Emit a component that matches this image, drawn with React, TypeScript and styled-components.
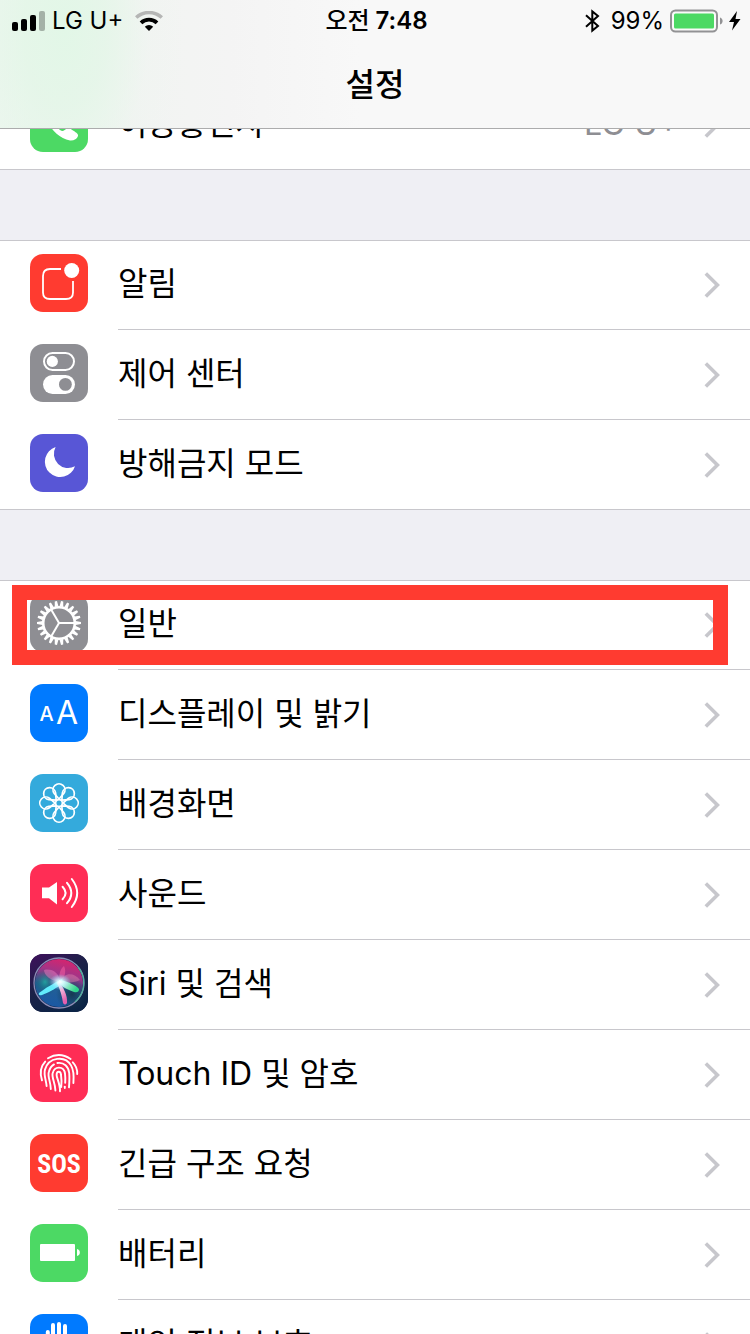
import React from "react";
import styled, { createGlobalStyle } from "styled-components";

const GlobalStyle = createGlobalStyle`
  * { box-sizing: border-box; }
  body {
    margin: 0;
    background: #efeff4;
    color: #000;
    font-family: Inter, "Noto Sans CJK KR", sans-serif;
  }
`;

const Screen = styled.div`
  height: 100vh;
  overflow: hidden;
  background: #efeff4;
`;

const Header = styled.header`
  position: relative;
  z-index: 2;
  height: 129px;
  border-bottom: 1px solid #acacad;
  background:
    radial-gradient(ellipse 120px 220px at 64px 30px, #e2f7e7 0%, rgba(228, 246, 232, 0.8) 35%, rgba(238, 245, 240, 0.35) 70%, rgba(244, 244, 244, 0) 100%),
    linear-gradient(to right, #e9f7ec 0, #ebf5ed 60px, #f2f4f2 150px, #f4f4f4 230px, #f8f8f8 360px, #f8f8f8 100%);
`;

const StatusBar = styled.div`
  display: grid;
  grid-template-columns: 1fr auto 1fr;
  align-items: center;
  height: 41px;
  padding: 0 9px 0 12px;
  font-size: 24px;
  line-height: 40px;
`;

const StatusSide = styled.div<{ $end?: boolean }>`
  display: flex;
  align-items: center;
  justify-content: ${(p) => (p.$end ? "flex-end" : "flex-start")};
  gap: ${(p) => (p.$end ? "6px" : "0")};
`;

const Carrier = styled.span`
  margin: 0 12px 0 6px;
`;

const Percent = styled.span`
  margin-left: 5px;
`;

const Clock = styled.time`
  font-weight: 600;
`;

const Meridiem = styled.span`
  font-weight: 500;
`;

const Title = styled.h1`
  margin: 0;
  height: 87px;
  font-size: 32px;
  line-height: 87px;
  font-weight: 500;
  text-align: center;
`;

const Groups = styled.main`
  display: flex;
  flex-direction: column;
  gap: 70px;
  margin-top: -49px;
`;

const Group = styled.ul`
  margin: 0;
  padding: 0;
  list-style: none;
  background: #fff;
  box-shadow: inset 0 1px #c8c7cc, inset 0 -1px #c8c7cc;
`;

const Item = styled.li`
  position: relative;
`;

const RowLink = styled.a`
  display: flex;
  height: 90px;
  padding-left: 30px;
  gap: 30px;
  color: inherit;
  text-decoration: none;
`;

const Tile = styled.svg<{ $color: string }>`
  flex: none;
  width: 58px;
  height: 58px;
  margin-top: 14px;
  border-radius: 13px;
  background: ${(p) => p.$color};
`;

const RowBody = styled.span<{ $last?: boolean }>`
  display: flex;
  flex: 1;
  align-items: center;
  padding-right: 30px;
  border-bottom: 1px solid ${(p) => (p.$last ? "transparent" : "#c8c7cc")};
`;

const Label = styled.span`
  flex: 1;
  padding-bottom: 2px;
  font-size: 32px;
  line-height: 48px;
`;

const Value = styled.span`
  margin-right: 25px;
  padding-bottom: 2px;
  color: #8e8e93;
  font-size: 32px;
  line-height: 48px;
`;

const Highlight = styled.div`
  position: absolute;
  z-index: 1;
  top: 5px;
  right: 22px;
  left: 12px;
  height: 80px;
  border: 15px solid #ff3b30;
  pointer-events: none;
`;

const Chevron = () => (
  <svg width="16" height="28" viewBox="0 0 16 28" fill="none" stroke="#c7c7cc" strokeWidth="3.6" aria-hidden="true">
    <path d="M1.8 2.4 13.4 14 1.8 25.6" />
  </svg>
);

const SignalIcon = () => (
  <svg width="34" height="20" viewBox="0 0 34 20" aria-label="signal">
    <rect x="0" y="11" width="6" height="9" rx="2" />
    <rect x="9" y="8" width="6" height="12" rx="2" />
    <rect x="18" y="4" width="6" height="16" rx="2" />
    <rect x="27" y="0" width="6" height="20" rx="2" fill="#000" opacity="0.28" />
  </svg>
);

const WifiIcon = () => (
  <svg width="28" height="20" viewBox="0 0 28 20" fill="none" aria-label="wifi">
    <path d="M1.2 6.6 A18.5 18.5 0 0 1 26.8 6.6" stroke="#b5b6b5" strokeWidth="3.4" />
    <path d="M6 11.8 A11.5 11.5 0 0 1 22 11.8" stroke="#000" strokeWidth="3.8" />
    <path d="M14 20 9.8 15.8 A6 6 0 0 1 18.2 15.8 Z" fill="#000" />
  </svg>
);

const BluetoothIcon = () => (
  <svg width="15" height="24" viewBox="0 0 15 24" fill="none" stroke="#000" strokeWidth="2" aria-label="bluetooth">
    <path d="M1 6.2 13 17 7.3 21.6 V2.4 L13 7 1 17.8" />
  </svg>
);

const BatteryIcon = () => (
  <svg width="53" height="24" viewBox="0 0 53 24" aria-label="battery">
    <rect x="1" y="1.5" width="46" height="21" rx="4.5" fill="#fafafa" stroke="#929294" strokeWidth="2" />
    <rect x="4" y="4.5" width="40" height="15" rx="1.5" fill="#4cd964" />
    <path d="M50 8.5 C53.5 9.5 53.5 14.5 50 15.5Z" fill="#929294" />
  </svg>
);

const BoltIcon = () => (
  <svg width="12" height="20" viewBox="0 0 12 20" aria-label="charging">
    <path d="M8 0 0 11 H5 L3 19.5 11.5 8 H6.5Z" />
  </svg>
);

const PhoneArt = () => (
  <path
    fill="#fff"
    d="M17 11 C20 10 24 17 24 19 C24 22 20 22 21 25 C23 29 26 33 30 36 C33 38 34 36.5 36 35 C38 33.5 40 34.5 43 36.5 C47 39 48.3 40 48 42 C47 45 44 46.8 40 46.5 C30 45 22 36 17 28 C11 18 12 14 17 11Z"
  />
);

const AlertsArt = () => (
  <>
    <path
      d="M31 15 H20 Q13 15 13 22 V38.5 Q13 45 20 45 H36 Q43 45 43 38.5 V27"
      fill="none"
      stroke="#fff"
      strokeWidth="1.8"
    />
    <circle cx="41.7" cy="16.5" r="7.5" fill="#fff" />
  </>
);

const ControlsArt = () => (
  <>
    <rect x="14" y="9" width="30" height="17" rx="8.5" fill="none" stroke="#fff" strokeWidth="2" />
    <circle cx="22.3" cy="17.4" r="5.6" fill="#fff" />
    <rect x="13" y="31" width="32" height="19" rx="9.5" fill="#fff" />
    <circle cx="35.4" cy="40.4" r="6.4" fill="#8e8e93" />
  </>
);

const MoonArt = () => (
  <path d="M25.6 13 A15.4 15.4 0 1 0 45 32.2 A14.2 14.2 0 0 1 25.6 13Z" fill="#fff" />
);

const TEETH = Array.from({ length: 22 }, (_, i) => (i * 360) / 22);
const PETALS = Array.from({ length: 8 }, (_, i) => i * 45);

const GearArt = () => (
  <g transform="translate(29 29)" fill="none" stroke="#fff">
    <circle r="15.8" strokeWidth="2.6" />
    {TEETH.map((a) => (
      <path key={a} d="M16.5 -1.9 L22 -1.1 V1.1 L16.5 1.9Z" fill="#fff" stroke="none" transform={`rotate(${a})`} />
    ))}
    {[0, 120, 240].map((a) => (
      <path key={a} d="M0 0 H16" strokeWidth="2" transform={`rotate(${a})`} />
    ))}
  </g>
);

const TextSizeArt = () => (
  <g fill="#fff" fontFamily="Inter, sans-serif">
    <text x="9.5" y="37" fontSize="20" fontWeight="500">A</text>
    <text x="26" y="40" fontSize="32" fontWeight="400">A</text>
  </g>
);

const FlowerArt = () => (
  <g transform="translate(29 29)" fill="none" stroke="#fff" strokeWidth="1.7" strokeLinejoin="round">
    <circle r="3.4" />
    {PETALS.map((a) => (
      <path key={a} d="M0 -4 L-4.8 -9.6 A6 6 0 1 1 4.8 -9.6Z" transform={`rotate(${a})`} />
    ))}
  </g>
);

const SoundArt = () => (
  <>
    <path d="M12 23.5 H19 L27 18 V40.5 L19 34.3 H12Z" fill="#fff" />
    <g fill="none" stroke="#fff" strokeWidth="2" strokeLinecap="round">
      <path d="M32.6 22.8 Q38.6 29 32.6 35.2" />
      <path d="M37 18.8 Q45.6 29 37 39.2" />
      <path d="M41.8 15 Q52.6 29 41.8 43" />
    </g>
  </>
);

const SiriArt = () => (
  <>
    <defs>
      <linearGradient id="siriBack" x1="0" y1="0" x2="0.6" y2="1">
        <stop offset="0" stopColor="#400f5c" />
        <stop offset="0.5" stopColor="#1c2148" />
        <stop offset="1" stopColor="#0b2345" />
      </linearGradient>
      <linearGradient id="siriOrb" x1="0.6" y1="0" x2="0.35" y2="1">
        <stop offset="0" stopColor="#d6246e" />
        <stop offset="0.35" stopColor="#96388d" />
        <stop offset="0.6" stopColor="#225f96" />
        <stop offset="1" stopColor="#1a58a4" />
      </linearGradient>
      <radialGradient id="siriTeal" cx="0.5" cy="0.5" r="0.5">
        <stop offset="0" stopColor="#1fa7a0" stopOpacity="0.9" />
        <stop offset="1" stopColor="#124a5c" stopOpacity="0" />
      </radialGradient>
      <radialGradient id="siriShade" cx="0.5" cy="0.5" r="0.5">
        <stop offset="0" stopColor="#16384f" stopOpacity="0.95" />
        <stop offset="1" stopColor="#16384f" stopOpacity="0" />
      </radialGradient>
      <radialGradient id="siriGlow" cx="0.5" cy="0.5" r="0.5">
        <stop offset="0" stopColor="#fff" />
        <stop offset="0.35" stopColor="#d3fbff" stopOpacity="0.8" />
        <stop offset="1" stopColor="#8fd9ff" stopOpacity="0" />
      </radialGradient>
      <linearGradient id="siriRight" x1="0" y1="0" x2="1" y2="0.4">
        <stop offset="0" stopColor="#fff" />
        <stop offset="1" stopColor="#2fd68c" />
      </linearGradient>
      <linearGradient id="siriDown" x1="0" y1="0" x2="0.3" y2="1">
        <stop offset="0" stopColor="#fff" />
        <stop offset="1" stopColor="#e25fae" />
      </linearGradient>
    </defs>
    <rect width="58" height="58" fill="url(#siriBack)" />
    <circle cx="29" cy="29" r="24" fill="url(#siriOrb)" />
    <ellipse cx="42" cy="40" rx="16" ry="17" fill="url(#siriShade)" />
    <ellipse cx="15" cy="28" rx="12" ry="14" fill="url(#siriTeal)" />
    <path d="M30 27 C21 28 14 21 14 16 C22 14 29 19 30 27Z" fill="#e77bbd" opacity="0.5" />
    <path d="M30 28 C28 20 31 14 34 12 C37 18 34 25 30 28Z" fill="#f05a9e" opacity="0.6" />
    <path d="M30 28 C34 18 44 18 50 26 C44 29 36 29 30 28Z" fill="#e690b0" opacity="0.4" />
    <path d="M32 25 C24 29 14 35 9 39 Q8 42 12 41 C20 38 28 33 33 29Z" fill="#62ecfb" />
    <path d="M29 26 C37 27 46 31 49 35 Q49 39 44 38 C38 36 33 33 29 30Z" fill="url(#siriRight)" />
    <path d="M28 27 C33 32 38 42 37 49 Q35 52 33 49 C32 42 30 35 27 29Z" fill="url(#siriDown)" />
    <ellipse cx="30" cy="28" rx="11" ry="8" fill="url(#siriGlow)" />
    <circle cx="29" cy="29" r="25" fill="none" stroke="#8a8bb5" strokeWidth="1.3" />
    <path d="M48 13 A25 25 0 0 1 45 48" fill="none" stroke="#4fb09c" strokeWidth="1.3" />
  </>
);

const FingerprintArt = () => (
  <g fill="none" stroke="#fff" strokeWidth="1.9" strokeLinecap="round">
    <path d="M18 14.2 Q29.5 7.5 40.6 15" />
    <path d="M15.2 17.6 C10.5 22.5 10 30 12 36.4" />
    <path d="M42.8 18.3 C46 21.5 47.4 26 47.2 30" />
    <path d="M16.6 42 C16.2 36 13.4 31 15 25.6 C18.6 13 35 11 41 21.4 C44 26.5 44 32 43.4 39" />
    <path d="M20.8 45 C20.8 38 17.4 33 18.8 28 C19.8 24 21.6 21.8 24 20.4" />
    <path d="M27.4 19 C34 18 38.6 22.6 39.2 29 C39.6 33.5 39.4 38 39 43.4" />
    <path d="M25.4 46.6 C25.4 39 21.6 34 22.6 29.4 C24.4 21.4 34 22 35 29.5 C35.4 33 35.4 36 35.2 38.8" />
    <path d="M30 47.2 C30.2 40 26.6 34 26.6 31 C26.6 26.6 30.8 26.6 31 31 C31.8 36 31.6 40 31.2 43" />
    <path d="M34.8 42.6 V44" />
  </g>
);

const SosArt = () => (
  <text
    x="29"
    y="39"
    fill="#fff"
    fontFamily="'Roboto Condensed', 'Open Sans Condensed', 'Noto Sans Condensed', Roboto, sans-serif"
    fontSize="26"
    fontWeight="700"
    textAnchor="middle"
  >
    SOS
  </text>
);

const PowerArt = () => (
  <>
    <rect x="10" y="20" width="35" height="17" rx="1" fill="#fff" />
    <path d="M47 25 C50.8 25.6 50.8 31.4 47 32Z" fill="#fff" />
  </>
);

const HandArt = () => (
  <g fill="none" stroke="#fff" strokeWidth="4" strokeLinecap="round">
    <path d="M17.8 18 V32 M23 11 V30 M29 10 V30 M35 12 V32" />
    <path d="M18 30 H35 V42 H22Z M42 28 L35 40" fill="#fff" />
  </g>
);

type Entry = { label: string; color: string; art: React.FC; value?: string; marked?: boolean };

const GROUPS: Entry[][] = [
  [{ label: "이동통신사", color: "#4cd964", art: PhoneArt, value: "LG U+" }],
  [
    { label: "알림", color: "#ff3b30", art: AlertsArt },
    { label: "제어 센터", color: "#8e8e93", art: ControlsArt },
    { label: "방해금지 모드", color: "#5856d6", art: MoonArt },
  ],
  [
    { label: "일반", color: "#8e8e93", art: GearArt, marked: true },
    { label: "디스플레이 및 밝기", color: "#007aff", art: TextSizeArt },
    { label: "배경화면", color: "#34aadc", art: FlowerArt },
    { label: "사운드", color: "#ff2d55", art: SoundArt },
    { label: "Siri 및 검색", color: "#1c2148", art: SiriArt },
    { label: "Touch ID 및 암호", color: "#ff2d55", art: FingerprintArt },
    { label: "긴급 구조 요청", color: "#ff3b30", art: SosArt },
    { label: "배터리", color: "#4cd964", art: PowerArt },
    { label: "개인 정보 보호", color: "#007aff", art: HandArt },
  ],
];

export default function App() {
  return (
    <Screen lang="ko">
      <GlobalStyle />
      <Header>
        <StatusBar>
          <StatusSide>
            <SignalIcon />
            <Carrier>LG U+</Carrier>
            <WifiIcon />
          </StatusSide>
          <Clock>
            <Meridiem>오전</Meridiem> 7:48
          </Clock>
          <StatusSide $end>
            <BluetoothIcon />
            <Percent>99%</Percent>
            <BatteryIcon />
            <BoltIcon />
          </StatusSide>
        </StatusBar>
        <Title>설정</Title>
      </Header>
      <Groups>
        {GROUPS.map((rows) => (
          <Group key={rows[0].label}>
            {rows.map(({ label, color, art: Art, value, marked }, i) => (
              <Item key={label}>
                <RowLink href="#">
                  <Tile $color={color} viewBox="0 0 58 58" aria-hidden="true">
                    <Art />
                  </Tile>
                  <RowBody $last={i === rows.length - 1}>
                    <Label>{label}</Label>
                    {value && <Value>{value}</Value>}
                    <Chevron />
                  </RowBody>
                </RowLink>
                {marked && <Highlight />}
              </Item>
            ))}
          </Group>
        ))}
      </Groups>
    </Screen>
  );
}
